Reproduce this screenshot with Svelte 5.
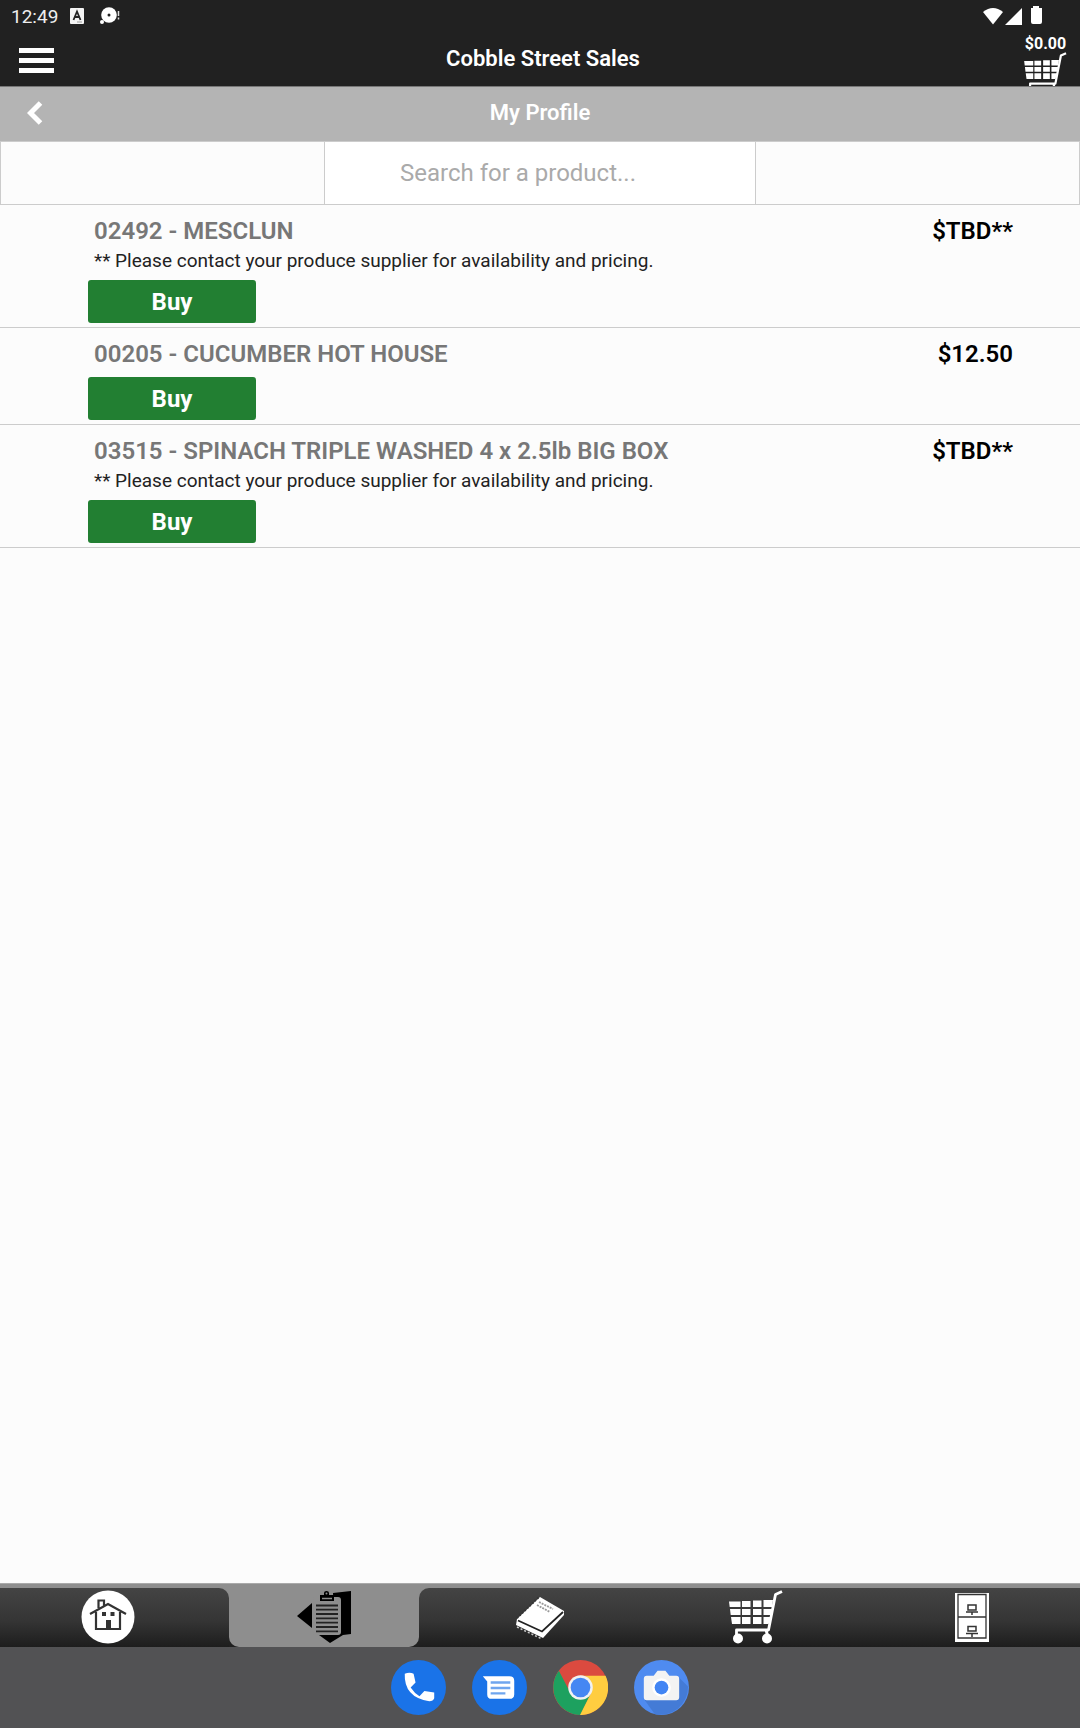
<script>
  const note = '** Please contact your produce supplier for availability and pricing.';
  const products = [
    { code: '02492', name: 'MESCLUN', price: '$TBD**', note },
    { code: '00205', name: 'CUCUMBER HOT HOUSE', price: '$12.50', note: '' },
    { code: '03515', name: 'SPINACH TRIPLE WASHED 4 x 2.5lb BIG BOX', price: '$TBD**', note }
  ];
  let query = $state('');
</script>

{#snippet cart()}
  <g fill="#fff">
    <path d="M0 11.5H11.5V17H.7ZM13 11H21.500V17H13ZM24 10.500H32.500V17H24ZM34.500 10H44L43 17H34.500Z" />
    <path d="M1 19H11.500V25H1.700ZM13 19H21.500V25H13ZM24 19H32.500V25H24ZM34.500 19H43L42 25H34.500Z" />
    <path d="M2 27H11.500V34H3ZM13 27H21.500V34H13ZM24 27H32.500V34H24ZM34.500 27H42L39.500 34H34.500Z" />
    <circle cx="9" cy="48.500" r="5" /><circle cx="38" cy="48.500" r="5" />
  </g>
  <path d="M53 1.500L46.500 4.500L39.500 40H7.500V47M37 40L39 47" fill="none" stroke="#fff" stroke-width="2.800" stroke-linejoin="round" />
{/snippet}

<div class="screen">
  <header>
    <div class="status">
      <time>12:49</time>
      <svg class="keyboard" viewBox="0 0 14 16" aria-hidden="true">
        <rect width="14" height="16" rx="1" fill="#f4f4f4" />
        <path d="M3.500 12L7 3.500L10.500 12M5 9H9" fill="none" stroke="#222" stroke-width="1.800" />
        <path d="M7 14H12" stroke="#999" />
      </svg>
      <svg class="notice" viewBox="0 0 20 18" aria-hidden="true">
        <circle cx="9" cy="8" r="7.800" fill="#fff" /><circle cx="9" cy="8" r="1.500" fill="#222" />
        <circle cx="2" cy="15" r="2" fill="#fff" />
        <path d="M18.500 4V9M18.500 10.500V12.500" stroke="#ddd" stroke-width="1.500" />
      </svg>
      <svg class="signals" viewBox="0 0 60 20" aria-hidden="true" fill="#fff">
        <path d="M0 6Q10 -2 20 6L10 18.500Z" /><path d="M22 19L39 2V19Z" />
        <path d="M50 0H56V2H59V16Q59 18 57 18H50Q48 18 48 16V2H50Z" />
      </svg>
    </div>
    <div class="title">
      <button class="menu" aria-label="Menu"><span></span><span></span><span></span></button>
      <h1>Cobble Street Sales</h1>
      <button class="basket" aria-label="Cart, $0.00">
        <span>$0.00</span>
        <svg viewBox="0 0 54 43" aria-hidden="true">{@render cart()}</svg>
      </button>
    </div>
  </header>

  <div class="subhead">
    <button aria-label="Back">
      <svg viewBox="0 0 16 24" aria-hidden="true"><path d="M13.500 2L3.500 12L13.500 22" fill="none" stroke="#fff" stroke-width="5" /></svg>
    </button>
    <h2>My Profile</h2>
  </div>

  <div class="search">
    <div></div>
    <input type="text" aria-label="Search for a product" placeholder="Search for a product..." bind:value={query} />
    <div></div>
  </div>

  <main>
    <ul>
      {#each products as item}
        <li>
          <div class="line"><h3>{item.code} - {item.name}</h3><strong>{item.price}</strong></div>
          {#if item.note}<p>{item.note}</p>{/if}
          <button class="buy">Buy</button>
        </li>
      {/each}
    </ul>
  </main>

  <nav class="tabs">
    <button aria-label="Home">
      <svg viewBox="0 0 54 54" aria-hidden="true">
        <circle cx="27" cy="27" r="26.500" fill="#fff" />
        <g fill="none" stroke="#333" stroke-width="2.200">
          <path d="M9 24L27 14L45 24M15 22V39H39V22M17.500 18V10.500H23V15.500" />
        </g>
        <path d="M21 22H25V26H21ZM29.500 22H33.500V26H29.500ZM25 30H30V39H25Z" fill="#333" />
      </svg>
    </button>
    <div class="current">
      <div class="slot">
        <button aria-label="Order guide" aria-current="page">
          <svg viewBox="0 0 54 54" aria-hidden="true">
            <path d="M36 3L54 1V44L46 45L33 53L22 45H38Z" fill="#000" /><path d="M0 26L15 13V38Z" fill="#000" />
            <rect x="16" y="7" width="28" height="38" rx="3" fill="#8e8e8e" />
            <path d="M23 5H27V3Q27 1 29.500 1Q32 1 32 3V5H37V11H23Z" fill="#000" /><path d="M25 8.500H35" stroke="#8e8e8e" stroke-width="1.500" />
            <circle cx="29.500" cy="3.500" r="1" fill="#8e8e8e" />
            <path d="M19 15.500H41M19 19.700H41M19 24H41M19 28.300H41M19 32.600H41M19 37H41M19 41.300H41" stroke="#222" stroke-width="1.800" />
          </svg>
        </button>
      </div>
    </div>
    <button aria-label="Catalog">
      <svg viewBox="0 0 54 54" aria-hidden="true">
        <path d="M4 29L27 7L51 21V25L30 48L3 35Z" fill="#fff" />
        <path d="M5 30.500L29 41.500L50 22" fill="none" stroke="#222" stroke-width="1.800" />
        <path d="M4 28L26 7" fill="none" stroke="#333" stroke-width="2" stroke-dasharray="1.500 2" />
        <path d="M4 37L29 49" stroke="#ccc" stroke-width="1.500" stroke-dasharray="2 2" />
        <path d="M26 12L40 19M24 15L37 22" stroke="#999" stroke-width="1.800" stroke-dasharray="2 1" />
      </svg>
    </button>
    <button aria-label="Cart"><svg viewBox="0 0 54 54" aria-hidden="true">{@render cart()}</svg></button>
    <button aria-label="Order history">
      <svg viewBox="0 0 54 54" aria-hidden="true">
        <rect x="10" y="3" width="34" height="49" fill="#fff" />
        <path d="M13 4.500H41V48H13ZM13 27H41" fill="none" stroke="#333" stroke-width="1.300" />
        <path d="M23 15H31V20H23ZM21 22H33M27 22V25M23 36.500H31V41H23ZM21 43.500H33M27 43.500V47" fill="none" stroke="#333" stroke-width="1.500" />
      </svg>
    </button>
  </nav>

  <nav class="dock" aria-label="Apps">
    <button aria-label="Phone">
      <svg viewBox="0 0 56 56" aria-hidden="true">
        <circle cx="28" cy="28" r="28" fill="#1a73e8" />
        <path d="M14 14Q19 12 23 14L25 23L20 28Q24 34 29 37L34 31.500L44 33V39Q43 42 39 42Q13 38 14 14Z" fill="#fff" />
      </svg>
    </button>
    <button aria-label="Messages">
      <svg viewBox="0 0 56 56" aria-hidden="true">
        <circle cx="28" cy="28" r="28" fill="#1a73e8" />
        <path d="M11 16.500H38Q43 16.500 43 21V35Q43 39.500 38 39.500H20Q15.500 39.500 15.500 35V22Z" fill="#fff" />
        <path d="M19 23H39M19 28.500H39M19 34H34" stroke="#6fa5ee" stroke-width="2.500" />
      </svg>
    </button>
    <button aria-label="Chrome">
      <svg viewBox="0 0 56 56" aria-hidden="true">
        <circle cx="28" cy="28" r="28" fill="#db4a3f" />
        <path d="M6 11A28 28 0 0 0 28 56L38 35L28 28L18 34Z" fill="#1da15f" />
        <path d="M28 16H53.500A28 28 0 0 1 27.500 56L38.500 34Z" fill="#ffcd40" />
        <circle cx="28" cy="28" r="12.500" fill="#f1f1f1" /><circle cx="28" cy="28" r="10" fill="#4587f3" />
      </svg>
    </button>
    <button aria-label="Camera">
      <svg viewBox="0 0 56 56" aria-hidden="true">
        <circle cx="28" cy="28" r="28" fill="#4f8bf0" />
        <path d="M45 17L55 27A28 28 0 0 1 21 55L11 41Z" fill="#447bd6" />
        <path d="M13 16H20L24 11H32L36 16H43Q46 16 46 19V38Q46 41 43 41H13Q10 41 10 38V19Q10 16 13 16Z" fill="#f3f3f3" />
        <circle cx="28" cy="28" r="9.500" fill="#fff" /><circle cx="28" cy="28" r="7" fill="#4285f4" />
      </svg>
    </button>
  </nav>
</div>

<style>
  :global(body) { margin: 0; }
  .screen { min-height: 100vh; display: flex; flex-direction: column; background: #fcfcfc; font-family: Roboto, sans-serif; color: #000; }
  .screen * { box-sizing: border-box; }
  button { border: 0; padding: 0; background: none; font-family: inherit; color: inherit; cursor: pointer; }
  svg { display: block; }
  h1, h2, h3, p, ul { margin: 0; padding: 0; }
  header { background: #212121; color: #fff; }
  .status { height: 32px; padding: 0 37px 0 11px; display: flex; align-items: center; font-size: 19px; color: #eee; }
  .keyboard { width: 14px; height: 16px; margin-left: 12px; }
  .notice { width: 20px; height: 18px; margin-left: 16px; }
  .signals { width: 60px; height: 20px; margin-left: auto; }
  .title { height: 55px; padding: 0 13px 0 19px; display: grid; grid-template-columns: 1fr auto 1fr; align-items: center; border-bottom: 1px solid #777; }
  h1, h2 { font-size: 22px; line-height: 28px; font-weight: 600; text-align: center; }
  .menu { width: 35px; padding-top: 2px; display: grid; gap: 5px; }
  .menu span { height: 5px; background: #fff; }
  .basket { justify-self: end; align-self: end; width: 43px; display: flex; flex-direction: column; align-items: center; font-size: 16px; font-weight: 700; line-height: 16px; }
  .basket svg { width: 43px; height: 34px; }
  .subhead { height: 54px; padding: 0 27px 2px; display: grid; grid-template-columns: 1fr auto 1fr; align-items: center; background: #b4b4b4; color: #fff; }
  .subhead button { justify-self: start; }
  .subhead svg { width: 16px; height: 24px; }
  .search { height: 64px; display: grid; grid-template-columns: 3fr 4fr 3fr; border: 1px solid #ccc; }
  .search input { min-width: 0; width: 100%; border: solid #ccc; border-width: 0 1px; padding: 0 44px 0 0; text-align: center; background: #fff; font: 24px Roboto, sans-serif; outline: 0; }
  .search input::placeholder { color: #aaa; opacity: 1; }
  main { flex: 1; }
  ul { list-style: none; }
  li { padding: 10px 67px 4px 88px; border-bottom: 1px solid #ccc; }
  .line { display: flex; justify-content: space-between; padding-left: 6px; font-size: 24px; line-height: 32px; }
  h3 { font-size: 24px; font-weight: 600; color: #777; }
  .line strong { font-weight: 600; }
  p { padding: 1px 0 0 6px; margin-bottom: -1px; font-size: 19px; line-height: 26px; color: #222; }
  .buy { display: block; margin-top: 7px; width: 168px; height: 43px; border-radius: 3px; background: #227f32; color: #fff; font-size: 24px; font-weight: 700; }
  .tabs { height: 64px; padding-top: 4px; display: grid; grid-template-columns: repeat(5, 1fr); background: #8e8e8e; border-top: 1px solid #aaa; }
  .tabs > button, .slot, .current::before, .current::after { background: linear-gradient(#444, #353535 55%, #1d1d1d); }
  .tabs button { padding-bottom: 2px; display: flex; justify-content: center; align-items: center; }
  .tabs svg { width: 54px; height: 54px; }
  .current { display: flex; }
  .current::before, .current::after { content: ''; flex: 0 0 13px; }
  .current::before { border-radius: 0 10px 0 0; }
  .current::after { border-radius: 10px 0 0 0; }
  .slot { flex: 1; display: flex; }
  .slot { background: linear-gradient(#8e8e8e 50%, #202020 50%); }
  .slot button { flex: 1; border-radius: 0 0 10px 10px; background: #8e8e8e; }
  .dock { height: 81px; padding-bottom: 1px; display: flex; justify-content: center; align-items: center; gap: 26px; background: #525254; }
  .dock svg { width: 55px; height: 55px; }
</style>
